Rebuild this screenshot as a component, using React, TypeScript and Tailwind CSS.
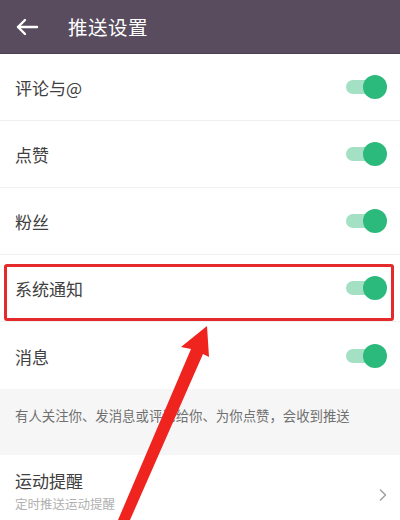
import { ChevronRight } from "lucide-react"

const font = { fontFamily: '"Noto Sans CJK SC", "Noto Sans", sans-serif' }

function Toggle() {
  return (
    <div className="relative h-6 w-[41px]">
      <div className="absolute left-0 top-[5px] h-[14px] w-[34px] rounded-full bg-[#a3e0c4]" />
      <div className="absolute right-0 top-0 h-6 w-6 rounded-full bg-[#2cb97c]" />
    </div>
  )
}

const rows = ["评论与@", "点赞", "粉丝", "系统通知", "消息"]

export default function App() {
  return (
    <div className="relative h-[520px] w-[400px] overflow-hidden bg-white" style={font}>
      <header className="flex h-[54px] items-center border-b border-[#4a3f50] bg-[#584c5e] text-white">
        <svg className="ml-[15px] h-6 w-6" viewBox="0 0 24 24" fill="none" stroke="white" strokeWidth="2.4" strokeLinecap="round" strokeLinejoin="round">
          <path d="M22 12H3" />
          <path d="M10 5l-7 7 7 7" />
        </svg>
        <h1 className="ml-[29px] text-[19.5px] tracking-[0.5px]">推送设置</h1>
      </header>

      {rows.map((label, i) => (
        <div
          key={label}
          className={`flex h-[67px] items-center justify-between pl-[15px] pr-[13px] ${i < rows.length - 1 ? "border-b border-[#f0f0f0]" : ""}`}
        >
          <span className="mt-[2px] text-[17px] text-[#404040]">{label}</span>
          <Toggle />
        </div>
      ))}

      <div className="flex h-[66px] items-start bg-[#f6f6f6] pl-[15px] pt-[16px]">
        <p className="text-[13.4px] text-[#707070]">有人关注你、发消息或评论给你、为你点赞，会收到推送</p>
      </div>

      <div className="flex items-center justify-between pl-[15px] pr-[7px] pt-[14px]">
        <div>
          <div className="text-[17px] leading-[24px] text-[#404040]">运动提醒</div>
          <div className="mt-[2px] text-[12.5px] text-[#b0b0b0]">定时推送运动提醒</div>
        </div>
        <ChevronRight className="mt-[8px] h-5 w-5 text-[#a0a0a0]" strokeWidth={1.8} />
      </div>

      {/* annotation overlay */}
      <div className="pointer-events-none absolute left-[4px] top-[264px] h-[57px] w-[390px] rounded-[3px] border-[3px] border-[#e42a2a]" />
      <svg className="pointer-events-none absolute left-0 top-0" width="400" height="520" viewBox="0 0 400 520">
        <polygon
          points="207,326 181,347 191,349 118,520 130,520 203,354 209,357"
          fill="#f0241f"
        />
      </svg>
    </div>
  )
}
